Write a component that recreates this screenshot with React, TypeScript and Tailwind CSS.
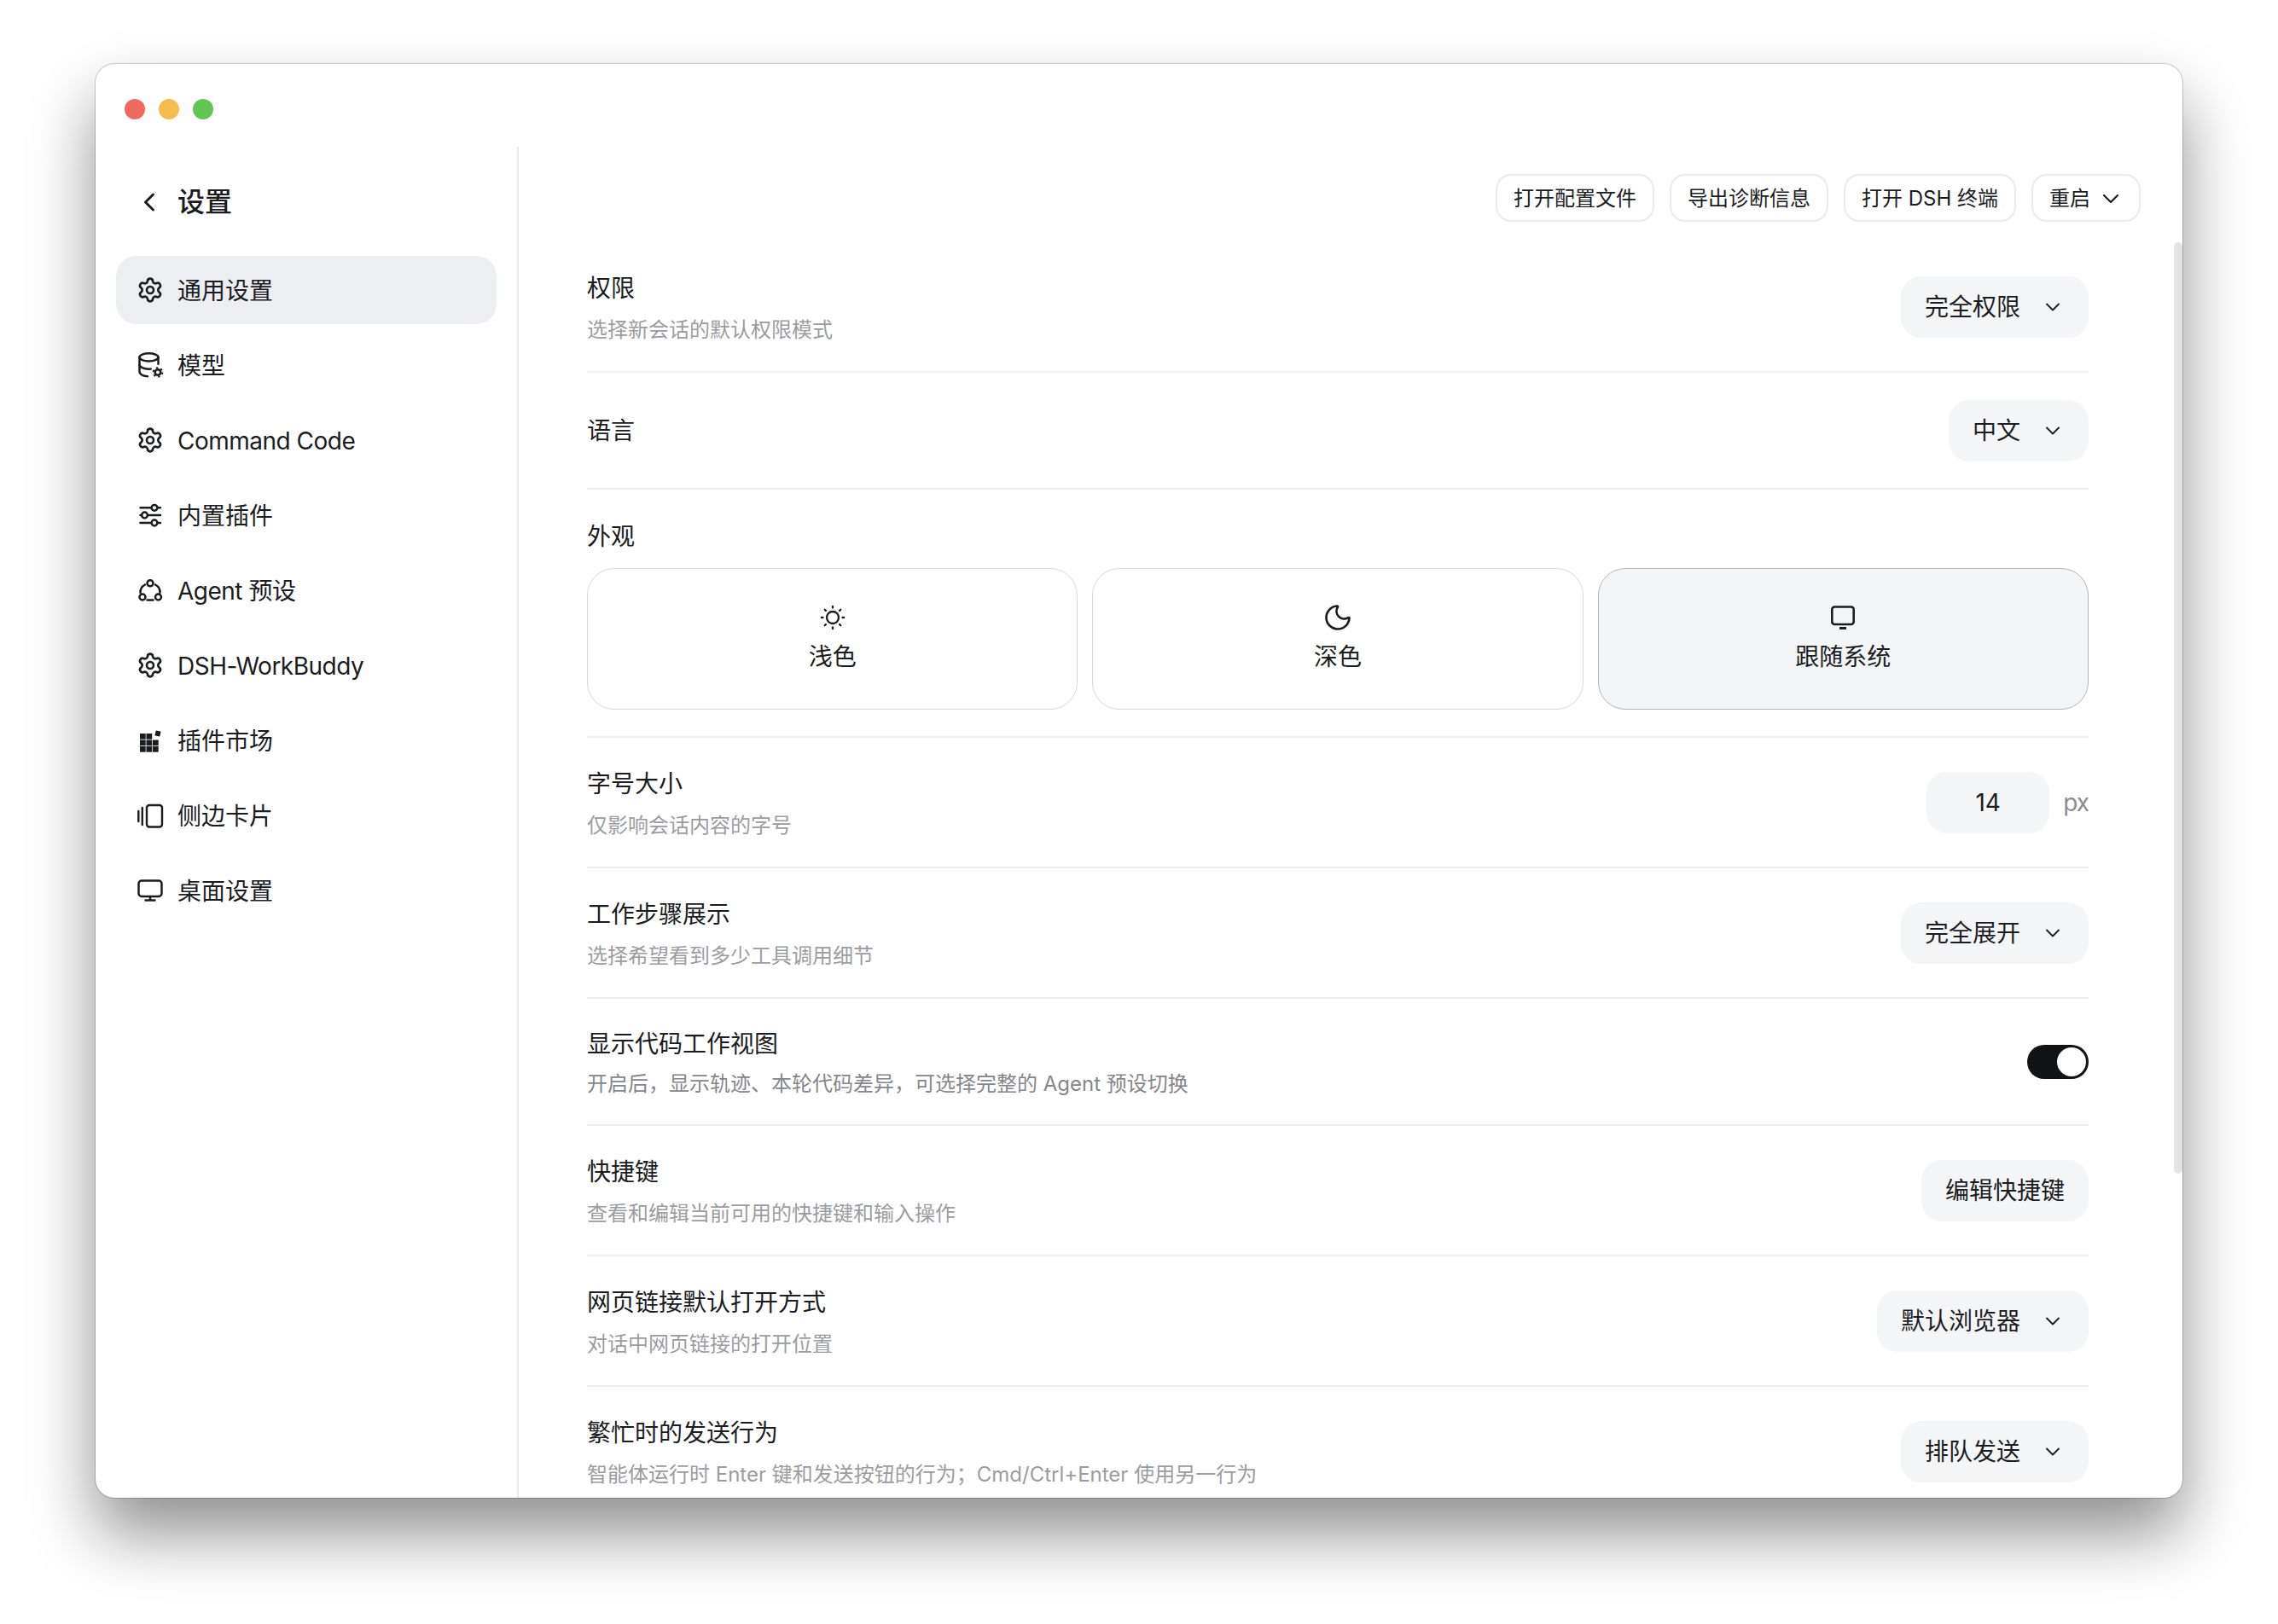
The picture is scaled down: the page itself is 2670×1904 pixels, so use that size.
import { ChevronDown, ChevronLeft, Moon, Settings } from "lucide-react";
import type { ReactNode } from "react";

function DbIcon() {
  return (
    <svg width="32" height="32" viewBox="0 0 32 32" fill="none" stroke="currentColor" strokeWidth="2.5" strokeLinecap="round">
      <ellipse cx="14.5" cy="6.8" rx="11" ry="4.6" />
      <path d="M3.500 6.800v17c0 3 4 5 9.500 5.400" />
      <path d="M25.500 6.800v8" />
      <path d="M3.500 15.500c0 3 5 5.200 11 5.200.8 0 1.500 0 2.200-.1" />
      <circle cx="25" cy="24.500" r="3.300" strokeWidth="2.600" />
      <circle cx="25" cy="24.500" r="5.400" strokeWidth="1.800" strokeDasharray="2.400 3.250" strokeLinecap="butt" />
    </svg>
  );
}

function SlidersIcon() {
  return (
    <svg width="32" height="32" viewBox="0 0 32 32" fill="none" stroke="currentColor" strokeWidth="2.500" strokeLinecap="round">
      <path d="M4.500 7.300h12.500M25 7.300h3M4.500 16h1.500M13 16h15M4.500 25h12.500M25 25h3" />
      <circle cx="21" cy="7.300" r="3.400" />
      <circle cx="9.500" cy="16" r="3.400" />
      <circle cx="21" cy="25" r="3.400" />
    </svg>
  );
}

function AgentIcon() {
  return (
    <svg width="32" height="32" viewBox="0 0 32 32" fill="none" stroke="currentColor" strokeWidth="2.500" strokeLinecap="round">
      <circle cx="16" cy="7.800" r="3.500" />
      <circle cx="7" cy="24" r="3.500" />
      <circle cx="25.500" cy="24" r="3.500" />
      <path d="M10 9.500C6.300 11.500 4.200 15 4.500 19" />
      <path d="M22 9.500c3.700 2 5.800 5.500 5.500 9.500" />
      <path d="M12.500 27.500h7" />
    </svg>
  );
}

function MarketIcon() {
  return (
    <svg width="32" height="32" viewBox="0 0 32 32" fill="currentColor">
      <rect x="4" y="8" width="6.700" height="6.700" />
      <rect x="11.500" y="8" width="6.700" height="6.700" />
      <rect x="4" y="15.500" width="6.700" height="6.700" />
      <rect x="11.500" y="15.500" width="6.700" height="6.700" />
      <rect x="19" y="15.500" width="6.700" height="6.700" />
      <rect x="4" y="23" width="6.700" height="6.700" />
      <rect x="11.500" y="23" width="6.700" height="6.700" />
      <rect x="19" y="23" width="6.700" height="6.700" />
      <rect x="22" y="5" width="6" height="6" rx="0.500" transform="rotate(12 25 8)" />
    </svg>
  );
}

function SideCardIcon() {
  return (
    <svg width="32" height="32" viewBox="0 0 32 32" fill="none" stroke="currentColor" strokeWidth="2.400" strokeLinecap="round">
      <path d="M2.300 11v12M6.800 7v20" />
      <rect x="12" y="4" width="18" height="25.500" rx="3" />
    </svg>
  );
}

function MonitorIcon() {
  return (
    <svg width="32" height="32" viewBox="0 0 32 32" fill="none" stroke="currentColor" strokeWidth="2.500" strokeLinecap="round">
      <rect x="2.500" y="4.500" width="27" height="18.500" rx="3.500" />
      <path d="M16 23v4.500M10.500 27.500h11" />
    </svg>
  );
}

function SunIcon() {
  return (
    <svg width="32" height="32" viewBox="0 0 32 32" fill="none" stroke="currentColor" strokeWidth="2.300" strokeLinecap="round">
      <circle cx="16" cy="16" r="7" />
      <path d="M16 2.800v1.700M16 27.500v1.700M2.800 16h1.700M27.500 16h1.700M6.700 6.700l1.200 1.200M24.100 24.100l1.200 1.200M6.700 25.300l1.200-1.200M24.100 7.900l1.200-1.200" />
    </svg>
  );
}

function SystemIcon() {
  return (
    <svg width="32" height="32" viewBox="0 0 32 32" fill="none" stroke="currentColor" strokeWidth="2.600" strokeLinecap="round">
      <rect x="3.300" y="3.500" width="25.400" height="20.500" rx="3" />
      <path d="M12 28.500h8" strokeWidth="3" strokeLinecap="butt" />
    </svg>
  );
}

function Select({ label }: { label: string }) {
  return (
    <div className="flex h-[72px] shrink-0 items-center gap-6 rounded-[24px] bg-[#f4f5f7] px-7 text-[28px] text-[#1b1c1f]">
      <span>{label}</span>
      <ChevronDown size={28} strokeWidth={1.6} />
    </div>
  );
}

function Row({
  title,
  desc,
  compact,
  children,
}: {
  title: string;
  desc?: string;
  compact?: boolean;
  children: ReactNode;
}) {
  return (
    <div className="flex items-center justify-between border-b-2 border-[#eeeef0]">
      {compact ? (
        <div className="pb-[29px] pt-8">
          <div className="text-[28px] leading-[42px] text-[#1b1c1f]">{title}</div>
          <div className="mt-2 text-[24px] leading-[36px] text-[#85868b]">{desc}</div>
        </div>
      ) : (
        <div className={desc ? "pb-[30px] pt-[33px]" : "pb-[46px] pt-[47px]"}>
          <div className="text-[28px] leading-[42px] text-[#1b1c1f]">{title}</div>
          {desc && <div className="mt-[10px] text-[24px] leading-[36px] text-[#9b9ca1]">{desc}</div>}
        </div>
      )}
      {children}
    </div>
  );
}

const navItems: { label: string; icon: ReactNode; active?: boolean; latin?: boolean }[] = [
  { label: "通用设置", icon: <Settings size={32} strokeWidth={2} />, active: true },
  { label: "模型", icon: <DbIcon /> },
  { label: "Command Code", icon: <Settings size={32} strokeWidth={2} />, latin: true },
  { label: "内置插件", icon: <SlidersIcon /> },
  { label: "Agent 预设", icon: <AgentIcon />, latin: true },
  { label: "DSH-WorkBuddy", icon: <Settings size={32} strokeWidth={2} />, latin: true },
  { label: "插件市场", icon: <MarketIcon /> },
  { label: "侧边卡片", icon: <SideCardIcon /> },
  { label: "桌面设置", icon: <MonitorIcon /> },
];

const toolbar = ["打开配置文件", "导出诊断信息", "打开 DSH 终端"];

const themes: { label: string; icon: ReactNode; active?: boolean }[] = [
  { label: "浅色", icon: <SunIcon /> },
  { label: "深色", icon: <Moon size={36} strokeWidth={1.8} /> },
  { label: "跟随系统", icon: <SystemIcon />, active: true },
];

export default function App() {
  return (
    <div className="h-[1904px] w-[2670px] overflow-hidden bg-white pl-[112px] pt-[75px] font-['Inter','Noto_Sans_CJK_SC',sans-serif]">
      <div className="relative flex h-[1681px] w-[2446px] flex-col overflow-hidden rounded-[22px] bg-white shadow-[0_0_0_1px_rgba(0,0,0,0.18),0_42px_78px_rgba(0,0,0,0.44)]">
        {/* traffic lights */}
        <div className="flex h-[97px] shrink-0 items-start gap-4 pl-[34px] pt-[41px]">
          <div className="h-6 w-6 rounded-full bg-[#ee6a5f]" />
          <div className="h-6 w-6 rounded-full bg-[#f5bd4f]" />
          <div className="h-6 w-6 rounded-full bg-[#61c554]" />
        </div>

        <div className="flex min-h-0 flex-1">
          {/* sidebar */}
          <div className="w-[496px] shrink-0 border-r-2 border-[#e9e9eb] pl-6 pr-6 pt-[37px]">
            <div className="mb-[35px] flex h-14 items-center gap-[15px] pl-[21px] text-[#1b1c1f]">
              <ChevronLeft size={36} strokeWidth={2} />
              <span className="text-[32px] font-medium">设置</span>
            </div>
            <div className="flex flex-col gap-2">
              {navItems.map((item) => (
                <div
                  key={item.label}
                  className={
                    item.active
                      ? "flex h-20 items-center gap-4 rounded-[24px] bg-[#edeef2] pl-6 text-[28px] text-[#1b1c1f]"
                      : "flex h-20 items-center gap-4 rounded-[24px] pl-6 text-[28px] text-[#1b1c1f]"
                  }
                >
                  {item.icon}
                  <span className={item.latin ? "pt-[2px] tracking-[-0.5px]" : "pt-[2px]"}>{item.label}</span>
                </div>
              ))}
            </div>
          </div>

          {/* main */}
          <div className="flex min-w-0 flex-1 flex-col">
            <div className="flex shrink-0 justify-end gap-[18px] pb-6 pr-[49px] pt-8">
              {toolbar.map((t) => (
                <div
                  key={t}
                  className="flex h-14 items-center rounded-[18px] border-2 border-[#ebebed] px-[19px] pt-[2px] text-[24px] text-[#1b1c1f]"
                >
                  {t}
                </div>
              ))}
              <div className="flex h-14 items-center gap-2 rounded-[18px] border-2 border-[#ebebed] pl-[19px] pr-[17px] pt-[2px] text-[24px] text-[#1b1c1f]">
                重启
                <ChevronDown size={32} strokeWidth={1.6} />
              </div>
            </div>

            <div className="min-h-0 flex-1 overflow-hidden pl-20 pr-[110px]">
              <Row title="权限" desc="选择新会话的默认权限模式">
                <Select label="完全权限" />
              </Row>
              <Row title="语言">
                <Select label="中文" />
              </Row>

              <div className="border-b-2 border-[#eeeef0] pb-[31px] pt-[34px]">
                <div className="mb-4 text-[28px] leading-[42px] text-[#1b1c1f]">外观</div>
                <div className="grid grid-cols-3 gap-[17px]">
                  {themes.map((t) => (
                    <div
                      key={t.label}
                      className={
                        t.active
                          ? "flex h-[166px] flex-col items-center justify-center gap-[9px] rounded-[32px] border border-[#b4b4ba] bg-[#f4f5f7] text-[28px] text-[#1b1c1f]"
                          : "flex h-[166px] flex-col items-center justify-center gap-[9px] rounded-[32px] border border-[#d9d9dc] bg-white text-[28px] text-[#1b1c1f]"
                      }
                    >
                      <div className="flex h-8 items-center justify-center">{t.icon}</div>
                      <span className="leading-[42px]">{t.label}</span>
                    </div>
                  ))}
                </div>
              </div>

              <Row title="字号大小" desc="仅影响会话内容的字号">
                <div className="flex shrink-0 items-center gap-4">
                  <div className="flex h-[72px] w-36 items-center justify-center rounded-[24px] bg-[#f4f5f7] text-[28px] text-[#1b1c1f]">
                    14
                  </div>
                  <span className="text-[28px] tracking-[-1px] text-[#8b8c91]">px</span>
                </div>
              </Row>
              <Row title="工作步骤展示" desc="选择希望看到多少工具调用细节">
                <Select label="完全展开" />
              </Row>
              <Row title="显示代码工作视图" desc="开启后，显示轨迹、本轮代码差异，可选择完整的 Agent 预设切换" compact>
                <div className="flex h-10 w-[72px] shrink-0 items-center justify-end rounded-full bg-[#111214] p-[3px]">
                  <div className="h-[34px] w-[34px] rounded-full bg-white" />
                </div>
              </Row>
              <Row title="快捷键" desc="查看和编辑当前可用的快捷键和输入操作">
                <div className="flex h-[72px] shrink-0 items-center rounded-[24px] bg-[#f4f5f7] px-7 text-[28px] text-[#1b1c1f]">
                  编辑快捷键
                </div>
              </Row>
              <Row title="网页链接默认打开方式" desc="对话中网页链接的打开位置">
                <Select label="默认浏览器" />
              </Row>
              <Row title="繁忙时的发送行为" desc="智能体运行时 Enter 键和发送按钮的行为；Cmd/Ctrl+Enter 使用另一行为">
                <Select label="排队发送" />
              </Row>
            </div>
          </div>
        </div>

        {/* scrollbar overlay */}
        <div className="absolute right-0 top-[209px] h-[1092px] w-[10px] rounded-full bg-[#e3e3e3]" />
      </div>
    </div>
  );
}
